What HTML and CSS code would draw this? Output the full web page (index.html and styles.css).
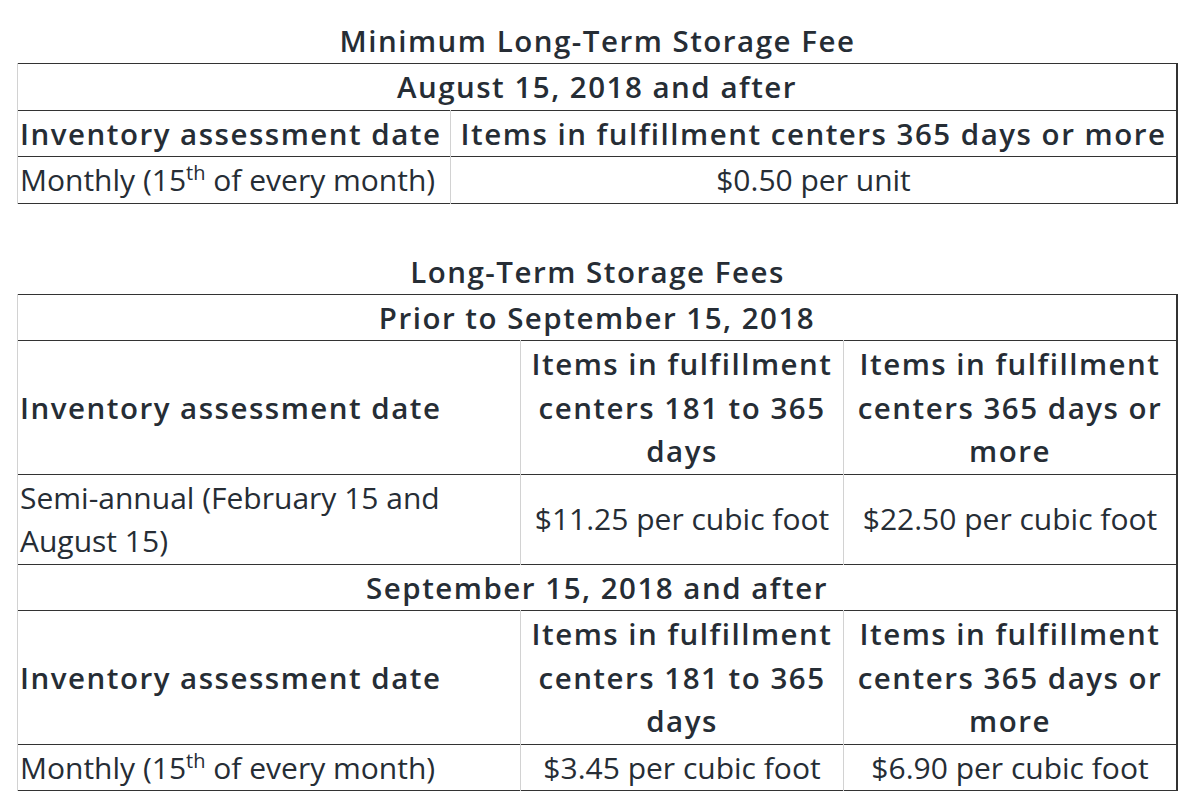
FILE: index.html
```html
<!DOCTYPE html>
<html>
<head>
<meta charset="utf-8">
<link rel="stylesheet" href="styles.css">
</head>
<body>
<div class="page">
  <table class="fees t1">
    <caption>Minimum Long-Term Storage Fee</caption>
    <colgroup><col class="c1a"><col></colgroup>
    <tr><th colspan="2" class="period">August 15, 2018 and after</th></tr>
    <tr><th class="left">Inventory assessment date</th><th>Items in fulfillment centers 365 days or more</th></tr>
    <tr><td class="left">Monthly (15<sup>th</sup> of every month)</td><td>$0.50 per unit</td></tr>
  </table>

  <table class="fees t2">
    <caption>Long-Term Storage Fees</caption>
    <colgroup><col class="c2a"><col class="c2b"><col></colgroup>
    <tr><th colspan="3" class="period">Prior to September 15, 2018</th></tr>
    <tr><th class="left">Inventory assessment date</th><th>Items in fulfillment centers 181 to 365 days</th><th>Items in fulfillment centers 365 days or more</th></tr>
    <tr><td class="left">Semi-annual (February 15 and August 15)</td><td>$11.25 per cubic foot</td><td>$22.50 per cubic foot</td></tr>
    <tr><th colspan="3" class="period">September 15, 2018 and after</th></tr>
    <tr><th class="left">Inventory assessment date</th><th>Items in fulfillment centers 181 to 365 days</th><th>Items in fulfillment centers 365 days or more</th></tr>
    <tr><td class="left">Monthly (15<sup>th</sup> of every month)</td><td>$3.45 per cubic foot</td><td>$6.90 per cubic foot</td></tr>
  </table>
</div>
</body>
</html>
```

FILE: styles.css
```css
html, body {
  margin: 0;
  padding: 0;
  background: #ffffff;
}
body {
  font-family: "Open Sans", "Liberation Sans", sans-serif;
  color: #262d35;
}
.page {
  padding: 19px 0 0 17px;
  width: 1161px;
}
.fees {
  width: 1161px;
  border-collapse: collapse;
  table-layout: fixed;
  border-left: 1px solid #333;
  border-right: 2px solid #333;
}
.t2 {
  margin-top: 46px;
}
caption {
  font-weight: 600;
  font-size: 29.5px;
  line-height: 44px;
  letter-spacing: 1.5px;
  text-align: center;
}
.c1a { width: 433px; }
.c2a { width: 503px; }
.c2b { width: 323px; }
tr {
  border-top: 1px solid #333;
  border-bottom: 1px solid #333;
}
th, td {
  line-height: 43.5px;
  padding: 1px 2px 1px 2px;
  border-left: 1px solid #d2d2d2;
  border-right: 1px solid #d2d2d2;
  text-align: center;
  vertical-align: middle;
}
th {
  font-size: 29.5px;
  font-weight: 600;
  letter-spacing: 1.5px;
}
td {
  font-size: 30px;
  font-weight: 400;
  letter-spacing: 0;
}
.left {
  text-align: left;
}
sup {
  font-size: 20px;
  line-height: 0;
  vertical-align: 11px;
}
```
